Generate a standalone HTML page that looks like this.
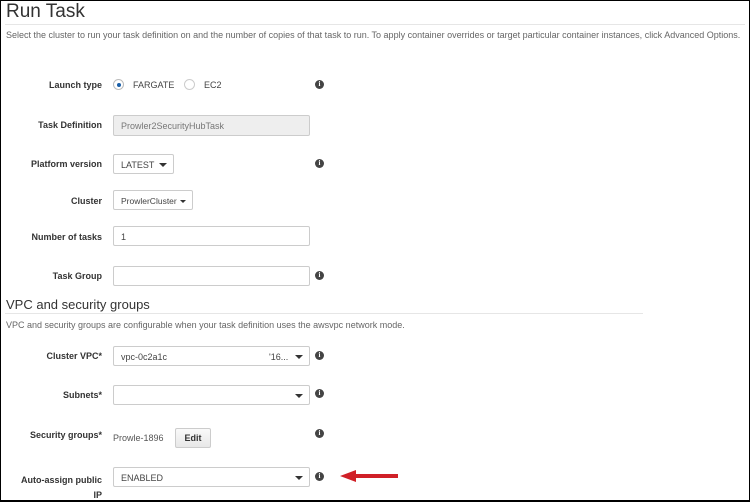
<!DOCTYPE html>
<html><head><meta charset="utf-8"><style>
*{margin:0;padding:0;box-sizing:border-box}
body{width:750px;height:502px;background:#fff;position:relative;overflow:hidden;font-family:"Liberation Sans",Arial,sans-serif;color:#333}
.frame{position:absolute;left:0;top:0;width:750px;height:502px;border:1px solid #000;border-bottom-width:2px}
.a{position:absolute;white-space:nowrap}
.lbl{position:absolute;right:648px;font-size:9px;font-weight:bold;color:#333;text-align:right}
.in{position:absolute;left:113px;width:197px;height:20px;border:1px solid #ccc;border-radius:2px;font-size:9px;padding:5px 7px;color:#444;background:#fff}
.car{position:absolute;right:6px;top:8px;width:0;height:0;border-left:4px solid transparent;border-right:4px solid transparent;border-top:4px solid #333}
.info{position:absolute;width:9px;height:9px;border-radius:50%;background:#444;color:#fff;font-size:7px;font-weight:bold;text-align:center;line-height:9px;font-family:"Liberation Serif",serif}
.radio{position:absolute;width:11px;height:11px;border-radius:50%;border:1px solid #ccc;background:#fff}
</style></head><body>
<div class="a" style="left:6px;top:1px;font-size:19px;color:#333">Run Task</div>
<div class="a" style="left:5px;top:24px;width:740px;height:1px;background:#e6e6e6"></div>
<div class="a" style="left:6px;top:30px;font-size:9px;color:#666">Select the cluster to run your task definition on and the number of copies of that task to run. To apply container overrides or target particular container instances, click Advanced Options.</div>

<div class="lbl" style="top:80px">Launch type</div>
<div class="radio" style="left:113px;top:79px;border-color:#bbb"><div style="position:absolute;left:2.5px;top:2.5px;width:4px;height:4px;border-radius:50%;background:#1a5fa8"></div></div>
<div class="a" style="left:133px;top:80px;font-size:9px;color:#444">FARGATE</div>
<div class="radio" style="left:184px;top:79px"></div>
<div class="a" style="left:204px;top:80px;font-size:9px;color:#444">EC2</div>
<div class="info" style="left:315px;top:80px">i</div>

<div class="lbl" style="top:120px">Task Definition</div>
<div class="in" style="top:115px;height:21px;background:#eee;color:#777">Prowler2SecurityHubTask</div>

<div class="lbl" style="top:159px">Platform version</div>
<div class="in" style="top:154px;width:61px">LATEST<div class="car"></div></div>
<div class="info" style="left:315px;top:159px">i</div>

<div class="lbl" style="top:196px">Cluster</div>
<div class="in" style="top:190px;width:80px;font-size:8.5px">ProwlerCluster<div class="car" style="border-width:3px 3px 0 3px;top:9px"></div></div>

<div class="lbl" style="top:232px">Number of tasks</div>
<div class="in" style="top:226px">1</div>

<div class="lbl" style="top:271px">Task Group</div>
<div class="in" style="top:266px"></div>
<div class="info" style="left:315px;top:271px">i</div>

<div class="a" style="left:6px;top:297px;font-size:13px;color:#333">VPC and security groups</div>
<div class="a" style="left:5px;top:313px;width:638px;height:1px;background:#e6e6e6"></div>
<div class="a" style="left:6px;top:320px;font-size:9px;color:#666">VPC and security groups are configurable when your task definition uses the awsvpc network mode.</div>

<div class="lbl" style="top:351px">Cluster VPC*</div>
<div class="in" style="top:346px">vpc-0c2a1c<span style="position:absolute;left:155px">'16...</span><div class="car"></div></div>
<div class="info" style="left:315px;top:351px">i</div>

<div class="lbl" style="top:390px">Subnets*</div>
<div class="in" style="top:385px"><div class="car"></div></div>
<div class="info" style="left:315px;top:389px">i</div>

<div class="lbl" style="top:430px">Security groups*</div>
<div class="a" style="left:113px;top:433px;font-size:9px;color:#555">Prowle-1896</div>
<div class="a" style="left:175px;top:428px;width:36px;height:20px;border:1px solid #ccc;border-radius:2px;background:linear-gradient(#fafafa,#e8e8e8);font-size:9px;font-weight:bold;text-align:center;line-height:18px">Edit</div>
<div class="info" style="left:315px;top:429px">i</div>

<div class="lbl" style="top:473px;line-height:15px">Auto-assign public<br>IP</div>
<div class="in" style="top:467px">ENABLED<div class="car"></div></div>
<div class="info" style="left:315px;top:472px">i</div>

<svg class="a" style="left:338px;top:468px" width="62" height="16"><path d="M2 8 L18 2 L18 6 L60 6 L60 10 L18 10 L18 14 Z" fill="#d02027"/></svg>
<div class="frame"></div>
</body></html>
